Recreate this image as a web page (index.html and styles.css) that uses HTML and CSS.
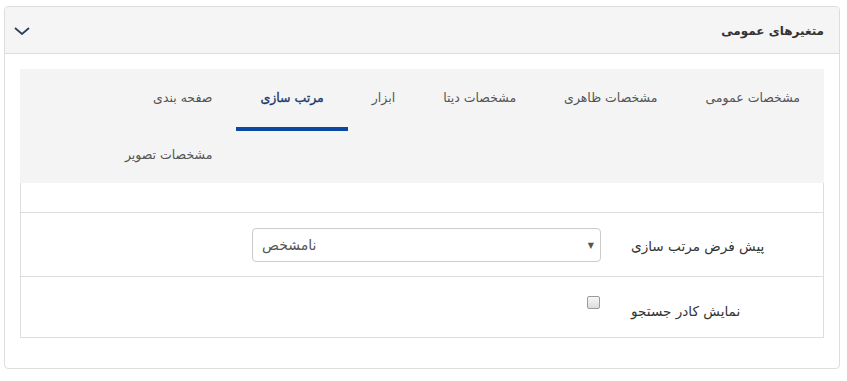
FILE: index.html
```html
<!DOCTYPE html>
<html lang="fa" dir="rtl">
<head>
<meta charset="utf-8">
<title>متغیرهای عمومی</title>
<link rel="stylesheet" href="styles.css">
</head>
<body>
<div class="card">
  <div class="card-header">
    <span class="title">متغیرهای عمومی</span>
    <svg class="chevron" width="16" height="8" viewBox="0 0 16 8"><polyline points="1,1 8,7 15,1" fill="none" stroke="#2c3e5a" stroke-width="1.8"/></svg>
  </div>
  <div class="card-body">
    <ul class="tabs">
      <li class="tab">مشخصات عمومی</li>
      <li class="tab">مشخصات ظاهری</li>
      <li class="tab">مشخصات دیتا</li>
      <li class="tab">ابزار</li>
      <li class="tab active">مرتب سازی</li>
      <li class="tab">صفحه بندی</li>
      <li class="tab">مشخصات تصویر</li>
    </ul>
    <div class="table">
      <div class="row row-empty"></div>
      <div class="row row-select">
        <div class="label">پیش فرض مرتب سازی</div>
        <div class="field">
          <div class="select"><span class="select-text">نامشخص</span><span class="select-arrow">▼</span></div>
        </div>
      </div>
      <div class="row row-check">
        <div class="label">نمایش کادر جستجو</div>
        <div class="field">
          <span class="checkbox"></span>
        </div>
      </div>
    </div>
  </div>
</div>
</body>
</html>
```

FILE: styles.css
```css
html, body {
  margin: 0;
  padding: 0;
  background: #fff;
}
body {
  font-family: Tahoma, "DejaVu Sans", sans-serif;
  font-size: 13px;
  color: #555;
}
.card {
  margin: 6px 7px 0 4px;
  width: 836px;
  box-sizing: border-box;
  border: 1px solid #ddd;
  border-radius: 4px;
  background: #fff;
}
.card-header {
  height: 46px;
  border-bottom: 1px solid #ddd;
  background: #f5f5f5;
  border-radius: 4px 4px 0 0;
  display: flex;
  align-items: center;
  justify-content: space-between;
  padding: 0 15px 0 9px;
}
.title {
  font-weight: bold;
  font-size: 12px;
  color: #333;
  padding-top: 1px;
}
.chevron {
  display: block;
  margin-top: 2px;
}
.card-body {
  padding: 15px 15px 30px 15px;
}
.tabs {
  list-style: none;
  margin: 0;
  padding: 0;
  background: #f4f4f4;
  overflow: hidden;
}
.tab {
  float: right;
  padding: 19px 24px 18px;
  line-height: 20px;
  font-size: 12.5px;
  color: #555;
}
.tab.active {
  color: #1c3a6e;
  -webkit-text-stroke: 0.35px #1c3a6e;
  border-bottom: 4px solid #0c47a1;
  padding-bottom: 19px;
}
.table {
  border: 1px solid #ddd;
  border-top: none;
}
.row {
  display: flex;
  align-items: flex-start;
}
.row + .row {
  border-top: 1px solid #ddd;
}
.row-empty {
  height: 29px;
}
.row-select {
  height: 63px;
}
.row-check {
  height: 60px;
}
.label {
  width: 207px;
  box-sizing: border-box;
  padding: 0 15px;
  text-align: left;
  line-height: 20px;
  font-size: 13.6px;
  color: #333;
  white-space: nowrap;
}
.row-select .label {
  padding-top: 23px;
}
.row-check .label {
  padding-top: 24px;
}
.field {
  flex: 1;
  display: flex;
  padding-right: 15px;
}
.row-select .field {
  padding-top: 15px;
}
.select {
  direction: ltr;
  width: 349px;
  height: 34px;
  box-sizing: border-box;
  border: 1px solid #ccc;
  border-radius: 4px;
  display: flex;
  align-items: center;
  justify-content: space-between;
  padding: 0 6px 0 9px;
  background: #fff;
  color: #555;
  font-size: 14px;
}
.select-text {
  direction: rtl;
}
.select-arrow {
  font-size: 8px;
  color: #555;
}
.row-check .field {
  padding-top: 19px;
}
.checkbox {
  display: block;
  width: 13px;
  height: 13px;
  box-sizing: border-box;
  border: 1px solid #9b9b9b;
  border-radius: 2px;
  background: linear-gradient(#f7f7f7, #dcdcdc);
  margin-right: 1px;
}
```
